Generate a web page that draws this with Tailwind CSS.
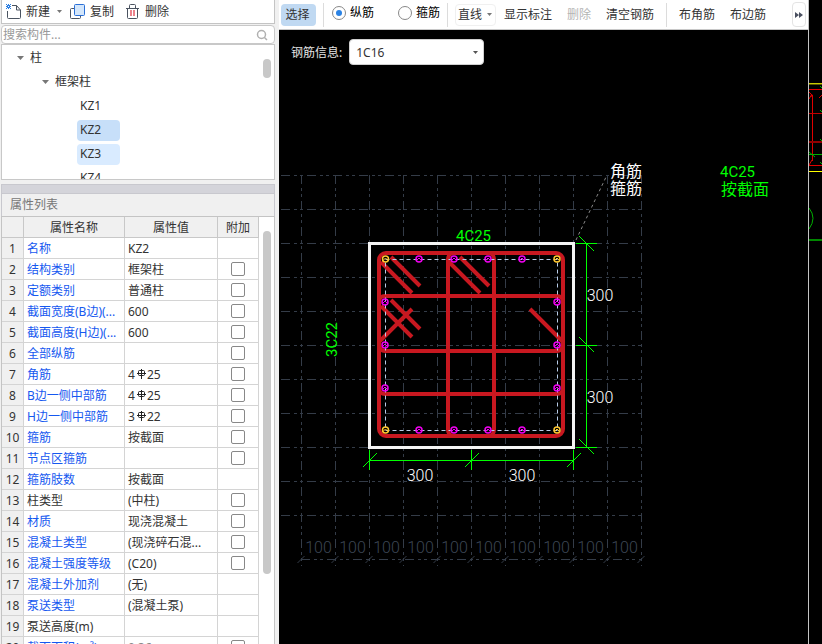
<!DOCTYPE html>
<html lang="zh-CN">
  <head>
    <meta charset="UTF-8" />
    <title>截面编辑</title>
    <script src="https://cdn.jsdelivr.net/npm/@tailwindcss/browser@4"></script>
  </head>
  <body class="flex h-screen overflow-hidden bg-[#f0f0f0] font-['Noto_Sans','Noto_Sans_CJK_SC',sans-serif] text-[12px] leading-4 text-[#333]">
    <!-- Left panel -->
    <aside class="flex w-[279px] shrink-0 flex-col pl-px pr-1">
      <div class="flex h-6 shrink-0 items-center border-x border-b border-[#c4c4c4] bg-white pl-1">
        <button class="flex items-center gap-1">
          <svg class="h-4 w-4" viewBox="0 0 16 16" fill="none">
            <path d="M6 1.500h4.500L14.500 6v7.500q0 1-1 1H2.500q-1 0-1-1V7M10.500 1.500V6h4" stroke="#4a5360" />
            <path d="M0 0h1v1h1V0h1v1h1V0h1v1H4v1h1v1H4v1h1v1H4V4H3v1H2V4H1v1H0V4h1V3H0V2h1V1H0zM2 2v1h1V2z" fill="#2a7de1" />
          </svg>
          <span>新建</span>
        </button>
        <svg class="ml-[7px] h-[3px] w-[5px]" viewBox="0 0 5 3"><path d="M0 0h5L2.500 3z" fill="#777" /></svg>
        <button class="ml-2 flex items-center gap-1">
          <svg class="h-4 w-4" viewBox="0 0 16 16" fill="none">
            <path d="M4.500 4.500h-3q-1 0-1 1v8q0 1 1 1h8q1 0 1-1v-2" stroke="#4a5360" />
            <rect x="4.500" y=".5" width="10" height="11" rx="1" fill="#d3e6fb" stroke="#2a6fd6" />
          </svg>
          <span>复制</span>
        </button>
        <button class="ml-[11px] flex items-center gap-1">
          <svg class="h-4 w-4" viewBox="0 0 16 16" fill="none">
            <path d="M1 4.500h13M4.500 4V1.500q0-1 1-1h4q1 0 1 1V4M2.500 4.500v9q0 1 1 1h8q1 0 1-1v-9" stroke="#4a5360" />
            <path d="M6 6v6M9 6v6" stroke="#e03040" stroke-width="1.200" />
          </svg>
          <span>删除</span>
        </button>
      </div>
      <label class="mt-px flex h-[19px] shrink-0 items-center rounded-sm border border-[#c8c8c8] bg-white pl-px pr-1">
        <input type="text" aria-label="搜索构件" placeholder="搜索构件..." class="h-4 min-w-0 flex-1 outline-none placeholder:text-[#999]" />
        <svg class="h-4 w-4" viewBox="0 0 16 16" fill="none" stroke="#b0b0b0" stroke-width="1.500"><circle cx="7.500" cy="7.500" r="4" /><path d="M10.500 10.500L13 13" /></svg>
      </label>

      <!-- Component tree -->
      <div class="relative h-[136px] shrink-0 overflow-hidden border border-[#c8c8c8] bg-white">
        <ul class="pt-px">
          <li class="flex h-6 items-center gap-1 pl-[14px]">
            <svg class="h-2 w-2" viewBox="0 0 8 8"><path d="M1 2h7L4.500 6z" fill="#777" /></svg><span class="pl-0.5">柱</span>
          </li>
          <li class="flex h-6 items-center gap-1 pl-[39px]">
            <svg class="h-2 w-2" viewBox="0 0 8 8"><path d="M1 2h7L4.500 6z" fill="#777" /></svg><span class="pl-0.5">框架柱</span>
          </li>
          <li class="flex h-6 items-center pl-[75px]"><span class="px-[3px]">KZ1</span></li>
          <li class="flex h-6 items-center pl-[75px]"><span class="h-[21px] w-[43px] rounded-sm bg-[#c7dff9] px-[3px] leading-5">KZ2</span></li>
          <li class="flex h-6 items-center pl-[75px]"><span class="h-[21px] w-[43px] rounded-sm bg-[#d9ebff] px-[3px] leading-5">KZ3</span></li>
          <li class="flex h-6 items-center pl-[75px]"><span class="px-[3px]">KZ4</span></li>
        </ul>
        <div class="absolute right-[3px] top-[14px] h-[19px] w-2 rounded-full bg-[#c8c8c8]"></div>
      </div>

      <div class="mt-1 h-[10px] shrink-0 border border-[#c8c8ce] bg-[#d4d4da]"></div>
      <h2 class="flex h-[22px] shrink-0 items-center border-x border-[#c8c8ce] pl-2 text-[#777]">属性列表</h2>

      <!-- Property table -->
      <div class="flex min-h-0 flex-1 overflow-hidden border-x border-t border-[#c4c4c4] bg-white">
        <table class="w-[257px] table-fixed border-separate border-spacing-0">
          <colgroup>
            <col class="w-[22px]" />
            <col class="w-[101px]" />
            <col class="w-[93px]" />
            <col class="w-[41px]" />
          </colgroup>
          <thead>
            <tr class="h-[21px] bg-[#f0f0f0] *:border-b *:border-r *:border-[#c8c8c8] *:px-0 *:pb-0 *:pt-0.5 *:font-normal">
              <th></th>
              <th>属性名称</th>
              <th>属性值</th>
              <th>附加</th>
            </tr>
          </thead>
          <tbody id="props"></tbody>
        </table>
        <div class="flex flex-1 justify-center pt-[14px]"><div class="h-[343px] w-2 rounded-full bg-[#c8c8c8]"></div></div>
      </div>
    </aside>

    <!-- Section editor -->
    <main class="flex min-w-0 flex-1 flex-col bg-black">
      <div class="flex h-[30px] shrink-0 items-center overflow-hidden whitespace-nowrap border-b border-[#c8c8c8] bg-white pl-0.5">
        <button class="h-[22px] w-[35px] rounded-sm bg-[#c0d9f2] pr-0.5">选择</button>
        <div class="ml-[7px] h-6 w-px bg-[#dcdcdc]"></div>
        <div class="ml-2 flex items-center gap-6 pb-1 text-black">
          <label class="flex items-center gap-1">
            <input type="radio" name="bar" checked class="h-[14px] w-[14px] appearance-none rounded-full border border-[#888] bg-white bg-clip-content p-[3px] checked:bg-[#2a82e4]" />纵筋
          </label>
          <label class="flex items-center gap-1">
            <input type="radio" name="bar" class="h-[14px] w-[14px] appearance-none rounded-full border border-[#888] bg-white bg-clip-content p-[3px] checked:bg-[#2a82e4]" />箍筋
          </label>
        </div>
        <div class="ml-[7px] h-6 w-px bg-[#dcdcdc]"></div>
        <button class="ml-[7px] flex h-[22px] items-center gap-[5px] rounded-sm border border-[#f0f0f0] pl-0.5 pr-[3px]">
          直线<svg class="h-[3px] w-[5px]" viewBox="0 0 5 3"><path d="M0 0h5L2.500 3z" fill="#777" /></svg>
        </button>
        <button class="ml-2">显示标注</button>
        <button class="ml-[15px] text-[#b4b4b4]" disabled>删除</button>
        <button class="ml-[15px]">清空钢筋</button>
        <div class="ml-3 h-6 w-px bg-[#dcdcdc]"></div>
        <button class="ml-3">布角筋</button>
        <button class="ml-[15px]">布边筋</button>
        <button aria-label="更多" class="ml-auto mr-0.5 flex h-[25px] w-[14px] items-center justify-center rounded-sm border border-[#e4e4e4]">
          <svg class="h-2 w-2 shrink-0" viewBox="0 0 8 8"><path d="M0 1l4 3-4 3zM4 1l4 3-4 3z" fill="#4a5060" /></svg>
        </button>
      </div>

      <div class="relative min-h-0 flex-1">
        <!-- 1 unit = 1px, origin shifted so that y starts under the toolbar -->
        <svg class="absolute inset-0 h-full w-full" fill="none">
          <g transform="translate(-279 -30)">
            <g id="grid" stroke="#343c48" stroke-dasharray="9 4 3 3 3 4"></g>
            <g id="scale" stroke="#343c48"></g>
            <g id="scale-text" class="font-['Roboto',sans-serif] text-[16px] font-light" fill="#3c4654" text-anchor="middle"></g>

            <path d="M576 240L607 175" stroke="#888" stroke-dasharray="3 3" />
            <rect x="369.500" y="243.500" width="204" height="204" stroke="#f4f4f4" stroke-width="3" />

            <g stroke="#c81820" stroke-width="4" stroke-linecap="butt">
              <rect x="379" y="253" width="184" height="183" rx="7" />
              <rect x="448" y="253" width="46" height="183" rx="6" />
              <rect x="379" y="296" width="184" height="98" rx="6" />
              <path d="M379 345q1 6 6 6h172q5 0 6-6" />
              <path d="M391 257l29 29M381 262l31 31M460 257l29 29M449 262l31 31" />
              <path d="M391 300l29 29M381 306l31 31M412 309l-33 33M530 309l33 33" />
            </g>
            <rect x="385.500" y="259.500" width="172" height="171" stroke="#b8cce8" stroke-dasharray="4 3" />
            <g id="bars"></g>

            <!-- Dimensions -->
            <g stroke="#00ff00">
              <path d="M586.500 243v205M576 243.500h21M576 345.500h21M576 447.500h21M579 236l15 15M579 337l15 15M579 439l15 15" />
              <path d="M369 460.500h205M369.500 450v20M471.500 450v20M573.500 450v20M363 467l14-14M465 467l14-14M567 467l14-14" />
            </g>
            <g class="font-['Roboto',sans-serif] text-[16px] font-light" fill="#fff" text-anchor="middle">
              <text x="600" y="301">300</text>
              <text x="600" y="403">300</text>
              <text x="420" y="481">300</text>
              <text x="522" y="481">300</text>
            </g>
            <g class="font-['Roboto',sans-serif] text-[15px]" fill="#00ff00">
              <text x="456" y="241">4C25</text>
              <text transform="translate(337 357) rotate(-90)">3C22</text>
              <text x="720" y="177">4C25</text>
            </g>
            <g class="font-['Noto_Sans_CJK_SC',sans-serif] text-[16px]">
              <text x="721" y="195" fill="#00ff00">按截面</text>
              <text x="610" y="177" fill="#fff">角筋</text>
              <text x="610" y="194" fill="#fff">箍筋</text>
            </g>
          </g>
        </svg>

        <div class="relative flex items-center gap-[7px] pl-3 pt-[9px]">
          <label for="info" class="pt-0.5 text-[#e4e4e4]">钢筋信息:</label>
          <div class="relative">
            <select id="info" class="h-[26px] w-[135px] appearance-none rounded-sm border border-[#d0d0d0] bg-white px-1.5 pt-0.5">
              <option>1C16</option>
            </select>
            <svg class="pointer-events-none absolute right-1.5 top-3 h-[3px] w-[5px]" viewBox="0 0 5 3"><path d="M0 0h5L2.500 3z" fill="#555" /></svg>
          </div>
        </div>
      </div>
    </main>

    <!-- Edge of the model view -->
    <div class="w-[14px] shrink-0 border-l border-[#c4c4c4] bg-black">
      <svg class="h-full w-full" fill="none">
        <path d="M0 83.500h13" stroke="#c8c800" />
        <path d="M0 84.500h13" stroke="#5a5a00" />
        <path d="M0 89.500h13M3.500 95v66M0 92q3 2 3 5M0 99l3-5M10 98l3-3M0 165l3-5M0 165.500h13" stroke="#e00000" />
        <path d="M0 113.500h13" stroke="#c00000" />
        <path d="M0 142h13" stroke="#900000" stroke-width="2" />
        <path d="M0 154.500h13M11 86l2 2M11 110l2 2M11 139l2 2M0 152l6 5M11 162l2 2M0 208q8 10 0 21" stroke="#00b000" />
        <path d="M0 171.500h13" stroke="#ffff00" />
        <path d="M0 240h13" stroke="#008800" stroke-width="2" />
      </svg>
    </div>

    <script>
      // [name, value, has checkbox, black name]
      const props = [
        ["名称", "KZ2", 0],
        ["结构类别", "框架柱", 1],
        ["定额类别", "普通柱", 1],
        ["截面宽度(B边)(...", "600", 1],
        ["截面高度(H边)(...", "600", 1],
        ["全部纵筋", "", 1],
        ["角筋", "4#25", 1],
        ["B边一侧中部筋", "4#25", 1],
        ["H边一侧中部筋", "3#22", 1],
        ["箍筋", "按截面", 1],
        ["节点区箍筋", "", 1],
        ["箍筋肢数", "按截面", 0],
        ["柱类型", "(中柱)", 1, 1],
        ["材质", "现浇混凝土", 1],
        ["混凝土类型", "(现浇碎石混...", 1],
        ["混凝土强度等级", "(C20)", 1],
        ["混凝土外加剂", "(无)", 0],
        ["泵送类型", "(混凝土泵)", 0],
        ["泵送高度(m)", "", 0, 1],
        ["截面面积(m²)", "0.36", 1],
      ];
      // Grade C rebar mark
      const mark =
        '<svg class="ml-0.5 mr-px mb-1 inline h-[10px] w-[9px]" viewBox="0 0 9 10" fill="none" stroke="#222"><path d="M4.500 0v10M2.500 1.500h4q1 0 1 1v3q0 1-1 1h-4q-1 0-1-1v-3q0-1 1-1M0 4.500h9" /></svg>';

      document.getElementById("props").innerHTML = props
        .map(
          ([name, value, check, black], i) => `
        <tr class="h-[21px] *:border-b *:border-r *:border-[#d4d4d4] *:p-0 whitespace-nowrap">
          <td class="bg-[#f0f0f0]"><div class="pt-0.5 text-center">${i + 1}</div></td>
          <td class="overflow-hidden"><div class="pl-[3px] pt-0.5 ${black ? "" : "text-[#1558f0]"}">${name}</div></td>
          <td class="overflow-hidden"><div class="pl-[3px] pt-0.5 ${i === 19 ? "text-[#888]" : ""}">${value.replace("#", mark)}</div></td>
          <td>${check ? `<input type="checkbox" aria-label="${name}附加" class="mx-auto block h-[14px] w-[14px] appearance-none rounded-xs border border-[#888] bg-white" />` : ""}</td>
        </tr>`
        )
        .join("");

      const draw = (id, html) => (document.getElementById(id).innerHTML = html);

      let grid = "";
      let scale = "";
      let scaleText = "";
      for (let i = 0; i <= 10; i++) {
        const x = 301.5 + i * 34;
        const y = 175.5 + i * 34;
        grid += `<path d="M281 ${y}H642M${x} 175V566" />`;
        scale += `<path d="M${x - 4} 563l7 -7" />`;
        if (i < 10) scaleText += `<text x="${x + 17}" y="553">100</text>`;
      }
      grid += '<path d="M301 559.5H642" />';
      draw("grid", grid);
      draw("scale", scale);
      draw("scale-text", scaleText);

      const bar = (x, y, c) =>
        `<circle cx="${x}" cy="${y}" r="3" stroke="${c}" stroke-width="1.500" /><path d="M${x - 3} ${y + 2}L${x} ${y - 1}l3 3" stroke="${c}" />`;
      let bars = "";
      for (const y of [259, 430]) {
        for (const x of [385.5, 557]) bars += bar(x, y, "#ffc830");
        for (const x of [419, 454, 488, 522]) bars += bar(x, y, "#f000f0");
      }
      for (const y of [302, 345, 388]) {
        for (const x of [385, 557]) bars += bar(x, y, "#f000f0");
      }
      draw("bars", bars);
    </script>
  </body>
</html>
